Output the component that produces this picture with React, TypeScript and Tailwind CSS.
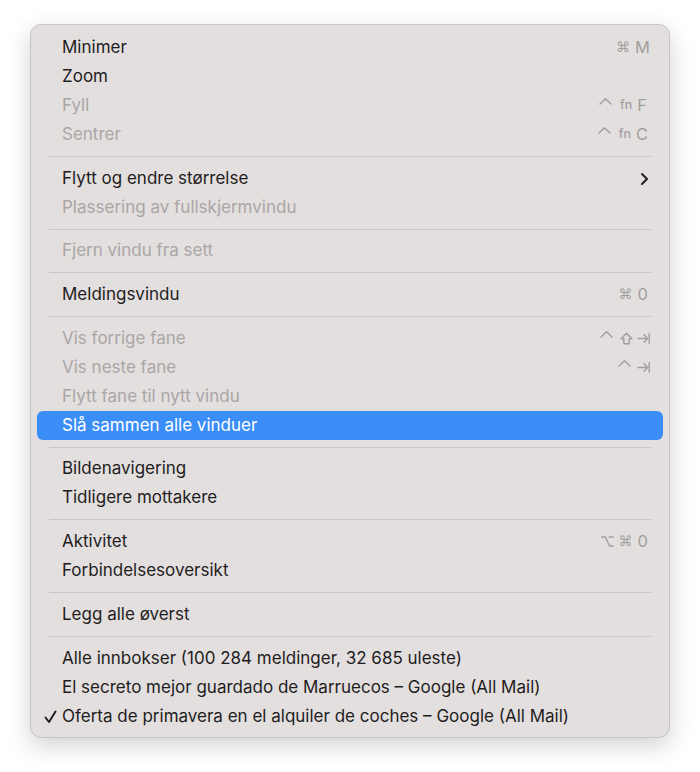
import { ReactNode } from "react";

type Item =
  | { sep: true; h?: string }
  | {
      sep?: false;
      label: string;
      disabled?: boolean;
      active?: boolean;
      checked?: boolean;
      submenu?: boolean;
      keys?: ReactNode;
    };

const Icon = ({ d, cls = "" }: { d: string; cls?: string }) => (
  <svg width="13" height="13" viewBox="0 0 13 13" className={cls}>
    <path d={d} fill="none" stroke="currentColor" strokeWidth="1.4" strokeLinecap="round" strokeLinejoin="round" />
  </svg>
);

const Ctrl = ({ cls = "" }: { cls?: string }) => <Icon d="M1 7 L6.5 1.8 L12 7" cls={`-mt-[5px] ${cls}`} />;
const Shift = ({ cls = "" }: { cls?: string }) => <Icon d="M6.5 1.2 L12 6.8 H9.2 V11.8 H3.8 V6.8 H1 Z" cls={cls} />;
const Tab = ({ cls = "" }: { cls?: string }) => <Icon d="M1 6.5 H10.5 M7 2.8 L10.6 6.5 L7 10.2 M12.2 1.8 V11.2" cls={cls} />;
const Opt = ({ cls = "" }: { cls?: string }) => <Icon d="M0.8 2 H4.4 L8.6 11 H12.2 M8.2 2 H12.2" cls={cls} />;
const Cmd = ({ cls = "" }: { cls?: string }) => (
  <span className={`font-['DejaVu_Sans',sans-serif] text-[14px] ${cls}`}>⌘</span>
);
const Fn = () => <span className="text-[12.5px] font-medium ml-[8px] mr-[5px]">fn</span>;

const items: Item[] = [
  { label: "Minimer", keys: <><Cmd /><span className="ml-[5px]">M</span></> },
  { label: "Zoom" },
  { label: "Fyll", disabled: true, keys: <><Ctrl /><Fn /><span className="mr-[3px]">F</span></> },
  { label: "Sentrer", disabled: true, keys: <><Ctrl /><Fn /><span className="mr-[2px]">C</span></> },
  { sep: true },
  { label: "Flytt og endre størrelse", submenu: true },
  { label: "Plassering av fullskjermvindu", disabled: true },
  { sep: true, h: "h-[14px]" },
  { label: "Fjern vindu fra sett", disabled: true },
  { sep: true },
  { label: "Meldingsvindu", keys: <><Cmd /><span className="ml-[5px] mr-[2px]">0</span></> },
  { sep: true },
  { label: "Vis forrige fane", disabled: true, keys: <><Ctrl /><Shift cls="ml-[7px]" /><Tab cls="ml-[4px]" /></> },
  { label: "Vis neste fane", disabled: true, keys: <><Ctrl /><Tab cls="ml-[6px]" /></> },
  { label: "Flytt fane til nytt vindu", disabled: true },
  { label: "Slå sammen alle vinduer", active: true },
  { sep: true, h: "h-[14px]" },
  { label: "Bildenavigering" },
  { label: "Tidligere mottakere" },
  { sep: true },
  { label: "Aktivitet", keys: <><Opt /><Cmd cls="ml-[5px]" /><span className="ml-[5px] mr-[2px]">0</span></> },
  { label: "Forbindelsesoversikt" },
  { sep: true },
  { label: "Legg alle øverst" },
  { sep: true },
  { label: "Alle innbokser (100 284 meldinger, 32 685 uleste)" },
  { label: "El secreto mejor guardado de Marruecos – Google (All Mail)" },
  { label: "Oferta de primavera en el alquiler de coches – Google (All Mail)", checked: true },
];

export default function App() {
  return (
    <div className="w-[700px] h-[772px] bg-white pl-[30px] pt-[24px] font-['Inter',sans-serif]">
      <div className="w-[640px] rounded-[11px] border border-[#c7c4c4] bg-[#e3dfdf] px-[6px] pt-[8px] pb-[6px] shadow-[0_8px_24px_rgba(0,0,0,0.18)]">
        {items.map((it, i) =>
          it.sep ? (
            <div key={i} className={`${it.h ?? "h-[15px]"} flex items-center px-[12px]`}>
              <div className="h-px w-full bg-[#c9c5c5]" />
            </div>
          ) : (
            <div
              key={i}
              className={`h-[29px] flex items-center rounded-[6px] pl-[25px] pr-[13px] text-[17px] relative ${
                it.active
                  ? "bg-[#3b8ef8] text-white"
                  : it.disabled
                  ? "text-[#aaa6a6]"
                  : "text-[#1f1d1d]"
              }`}
            >
              {it.checked && (
                <svg className="absolute left-[7px] top-[8px]" width="13" height="14" viewBox="0 0 13 14">
                  <path d="M1.5 7.5 L5 12 L11.5 1.5" fill="none" stroke="#1f1d1d" strokeWidth="2" strokeLinecap="round" strokeLinejoin="round" />
                </svg>
              )}
              <span className="flex-1 whitespace-nowrap">{it.label}</span>
              {it.keys && (
                <span className="flex items-center text-[16.5px] text-[#a19e9e]">{it.keys}</span>
              )}
              {it.submenu && (
                <svg width="9" height="14" viewBox="0 0 9 14" className="mr-[1px]">
                  <path d="M2 2 L7 7 L2 12" fill="none" stroke="#1f1d1d" strokeWidth="2" strokeLinecap="round" strokeLinejoin="round" />
                </svg>
              )}
            </div>
          )
        )}
      </div>
    </div>
  );
}
